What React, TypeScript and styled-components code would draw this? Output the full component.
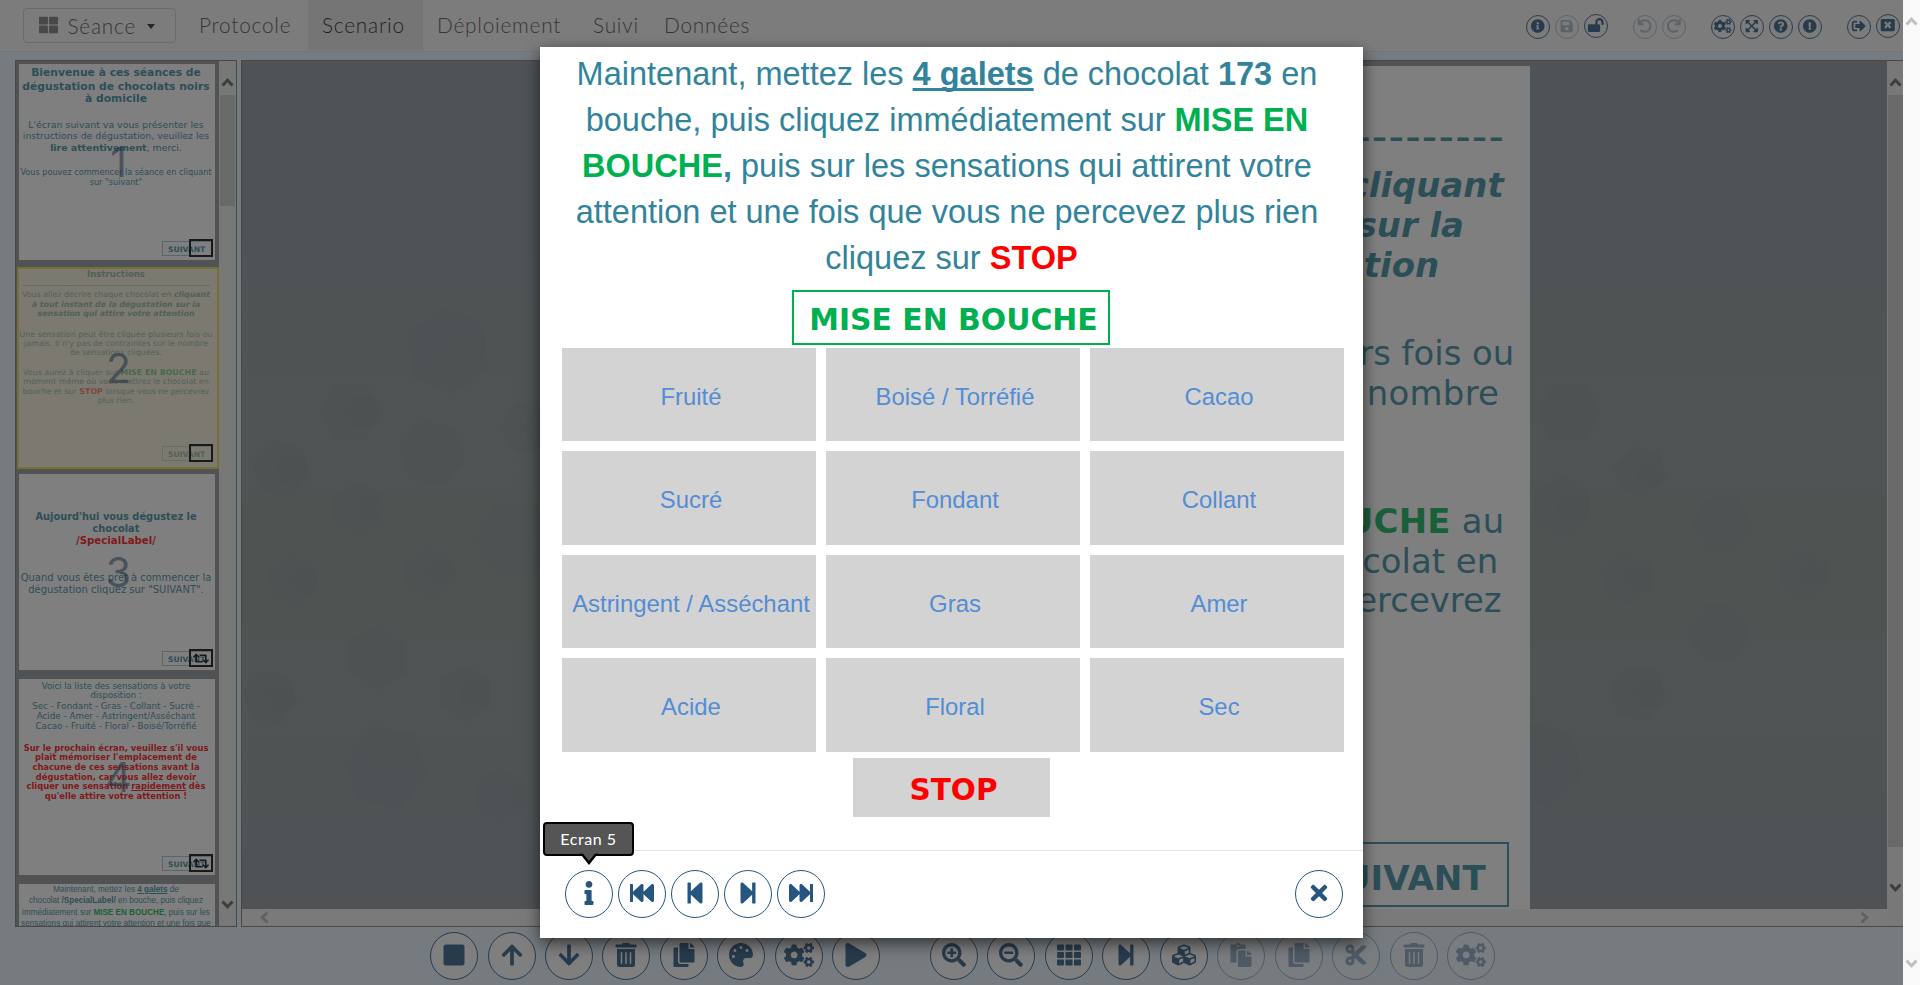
import React from 'react';
import styled, { createGlobalStyle, css } from 'styled-components';
import type { IconType } from 'react-icons';
import {
  FaThLarge, FaInfoCircle, FaSave, FaLockOpen, FaUndo, FaRedo, FaCogs, FaExpandArrowsAlt,
  FaQuestionCircle, FaExclamationCircle, FaSignOutAlt, FaWindowClose, FaStop, FaArrowUp,
  FaArrowDown, FaTrashAlt, FaCopy, FaPalette, FaPlay, FaSearchPlus, FaSearchMinus, FaTh,
  FaStepForward, FaStepBackward, FaFastBackward, FaFastForward, FaCubes, FaPaste, FaCut,
  FaInfo, FaTimes, FaRetweet,
} from 'react-icons/fa';

const TEAL = '#31849b';
const GREEN = '#00b050';
const NAVY = '#26567f';
const GOTHIC = "'Century Gothic', Lato, sans-serif";
const VERDANA = "'DejaVu Sans', sans-serif";
const ARIAL = "'Liberation Sans', sans-serif";

const GlobalStyle = createGlobalStyle`
  html, body { margin: 0; overflow: hidden; }
  *, *::before, *::after { box-sizing: border-box; }
  button { padding: 0; font: inherit; }
`;

const Screen = styled.div`
  position: relative;
  display: flex;
  width: 1920px;
  height: 985px;
  overflow: hidden;
`;

const Page = styled.div`
  display: flex;
  flex-direction: column;
  width: 1903px;
  height: 985px;
  background: #e5f4fe;
`;

const WindowScroll = styled.div`
  display: flex;
  flex-direction: column;
  align-items: center;
  justify-content: space-between;
  width: 17px;
  padding: 17px 0;
  background: #f9f9f9;
  color: #c0c0c0;
`;

/* ---------- navigation bar ---------- */

const NavBar = styled.nav`
  display: flex;
  height: 52px;
  flex: none;
  padding-left: 23px;
  background: #f7f7f7;
  border-bottom: 1px solid #e4e4e4;
  font-family: ${GOTHIC};
  font-size: 20.8px;
  font-weight: 300;
  letter-spacing: 0.78px;
  color: #4a4a4a;
`;

const SessionSelect = styled.div`
  display: flex;
  align-items: center;
  width: 153px;
  height: 35px;
  margin-top: 8px;
  padding-left: 15px;
  border: 1px solid #ccc;
  border-radius: 4px;
  > svg { width: 19px; height: 20px; margin-right: 9.5px; margin-top: -2px; color: #777; }
`;

const Caret = styled.span`
  margin: 2px 0 0 11px;
  border: 4.5px solid transparent;
  border-top: 5px solid #222;
  border-bottom: 0;
`;

const NavLink = styled.a<{ $active?: boolean; $width: number }>`
  width: ${p => p.$width}px;
  height: 50px;
  line-height: 49px;
  padding-left: 14px;
  ${p => p.$active && css`background: #e5e5e5; color: #111;`}
`;

const NavLinks = styled.div`
  display: flex;
  margin-left: 9px;
`;

const NavTools = styled.div`
  display: flex;
  margin-left: auto;
  padding: 15px 3px 0 0;
  gap: 5px;
`;

const ToolGroup = styled.div`
  display: flex;
  gap: 5px;
  margin-left: 20px;
`;

const RoundButton = styled.button<{ $size: number; $icon: number; $faded?: boolean; $lift?: boolean }>`
  display: flex;
  flex: none;
  align-items: center;
  justify-content: center;
  width: ${p => p.$size}px;
  height: ${p => p.$size}px;
  border: 1px solid ${NAVY};
  border-radius: 50%;
  background: #fff;
  color: ${NAVY};
  opacity: ${p => (p.$faded ? 0.5 : 1)};
  ${p => p.$lift && css`margin-top: -1px;`}
  > svg {
    flex: none;
    width: ${p => p.$icon * 1.25}px;
    height: ${p => p.$icon}px;
    margin-top: -2px;
  }
`;

const NavRound = styled(RoundButton)`
  background: transparent;
  opacity: ${p => (p.$faded ? 0.38 : 1)};
`;

/* ---------- work area ---------- */

const WorkArea = styled.main`
  display: flex;
  gap: 4px;
  height: 867px;
  flex: none;
  margin-top: 8px;
  padding-left: 15px;
`;

const Sidebar = styled.aside`
  display: flex;
  width: 222px;
  border: 1px solid #777;
  background: #889297;
`;

const CardList = styled.div`
  flex: 1;
  padding: 1px 0 0 1px;
  overflow: hidden;
`;

const ScrollTrack = styled.div<{ $w: number }>`
  display: flex;
  flex-direction: column;
  align-items: center;
  width: ${p => p.$w}px;
  padding-top: 17px;
  background: #eee;
  color: #5a5a5a;
`;

const ScrollThumb = styled.div<{ $h: number }>`
  width: 15px;
  height: ${p => p.$h}px;
  margin-top: 8px;
  background: #c9c9c9;
`;

const ArrowSpacer = styled.div<{ $h: number }>`
  height: ${p => p.$h}px;
`;

const Card = styled.section<{ $selected?: boolean }>`
  --edge: 0px;
  position: relative;
  width: 200px;
  height: 200px;
  margin-bottom: 5px;
  padding-right: 2px;
  border: 2px solid #8e8e8e;
  background: #fff;
  text-align: center;
  font-family: ${VERDANA};
  color: ${TEAL};
  overflow: hidden;
  ${p => p.$selected && css`
    --edge: 2px;
    width: 202px;
    height: 202px;
    margin-bottom: 3px;
    padding-right: 4px;
    border-color: #e9dc40;
    &::after {
      content: '';
      position: absolute;
      inset: 0;
      background: rgba(238, 228, 175, 0.47);
    }
  `}
`;

const CardLine = styled.div<{ $size: number; $gap?: number; $bold?: boolean }>`
  height: 10px;
  margin: ${p => p.$gap ?? 0}px -20px 0;
  line-height: 10px;
  font-size: ${p => p.$size}px;
  font-weight: ${p => (p.$bold ? 700 : 400)};
  white-space: nowrap;
`;

const Red = styled.b`color: #f00;`;
const Green = styled.b`color: ${GREEN};`;

const CardNumber = styled.span`
  position: absolute;
  z-index: 2;
  inset: 0 var(--edge) 0 3px;
  display: flex;
  align-items: center;
  justify-content: center;
  font-family: 'Century Gothic', Inter, sans-serif;
  font-size: 41px;
  color: #24486c;
  opacity: 0.6;
`;

const CardNext = styled.span`
  position: absolute;
  right: calc(3px + var(--edge));
  bottom: calc(4px + var(--edge));
  width: 50px;
  height: 15px;
  padding-left: 5px;
  border: 1px solid #9cc4cf;
  text-align: left;
  font-size: 7.6px;
  line-height: 15px;
  font-weight: 700;
`;

const CardFlag = styled.span`
  position: absolute;
  z-index: 2;
  right: calc(2px + var(--edge));
  bottom: calc(3px + var(--edge));
  display: flex;
  align-items: center;
  justify-content: center;
  width: 24px;
  height: 18px;
  border: 2px solid #000;
  color: #000;
  > svg { width: 16px; height: 13px; flex: none; }
`;

const Stage = styled.section`
  display: flex;
  flex: 1;
  border: 1px solid #777;
  border-right: 0;
  background: #889297;
`;

const StageColumn = styled.div`
  flex: 1;
  display: flex;
  flex-direction: column;
`;

const StageView = styled.div`
  position: relative;
  flex: 1;
  display: flex;
  justify-content: flex-end;
  padding: 5px 357px 0 0;
`;

const Pattern = styled.svg`
  position: absolute;
  inset: 0;
`;

const StageScroll = styled.div`
  display: flex;
  align-items: center;
  justify-content: space-between;
  height: 17px;
  padding: 0 17px;
  background: #f2f2f2;
  color: #b4b4b4;
`;

const Sheet = styled.article`
  position: relative;
  display: flex;
  flex-direction: column;
  align-items: center;
  width: 860px;
  height: 843px;
  padding-top: 12px;
  background: #fff;
  color: ${TEAL};
  font-family: ${VERDANA};
  font-size: 33.9px;
  white-space: nowrap;
`;

const SheetLine = styled.div<{ $gap?: number; $track?: number; $dashes?: boolean }>`
  height: 40px;
  line-height: 40px;
  margin-top: ${p => p.$gap ?? 0}px;
  letter-spacing: ${p => p.$track ?? 0}px;
  ${p => p.$dashes && css`
    font-size: 43px;
    line-height: 36px;
    letter-spacing: 1.16px;
    padding-left: 10px;
  `}
`;

const SheetNext = styled.div`
  width: 214px;
  height: 65px;
  margin: auto 21px 2px auto;
  padding-top: 3px;
  border: 2px solid ${TEAL};
  text-align: center;
  font-size: 34.2px;
  font-weight: 700;
  line-height: 62px;
`;

const Toolbar = styled.div`
  display: flex;
  justify-content: center;
  gap: 9.45px;
  padding: 5px 0 0 22px;
`;

const ToolbarGap = styled.span`width: 31px;`;

/* ---------- preview dialog ---------- */

const Overlay = styled.div`
  position: absolute;
  z-index: 10;
  inset: 0 17px 0 0;
  background: rgba(42, 42, 42, 0.6);
`;

const Dialog = styled.div`
  position: absolute;
  z-index: 11;
  top: 47px;
  left: 540px;
  display: flex;
  flex-direction: column;
  align-items: center;
  width: 823px;
  height: 891px;
  padding-top: 3.6px;
  background: #fff;
  box-shadow: 0 5px 15px rgba(0, 0, 0, 0.6);
`;

const Prompt = styled.p`
  margin: 0;
  height: 239.4px;
  font: 32.5px/46.2px ${ARIAL};
  color: ${TEAL};
  text-align: center;
  white-space: pre;
  u { text-decoration-thickness: 3px; text-underline-offset: 3px; text-decoration-skip-ink: none; }
`;

const StartButton = styled.button`
  width: 318px;
  height: 55px;
  margin-right: 2px;
  padding: 5px 0 0 6px;
  border: 2px solid ${GREEN};
  background: #fff;
  color: ${GREEN};
  font: 700 29.85px ${VERDANA};
`;

const Descriptors = styled.div`
  display: grid;
  grid-template-columns: repeat(3, 254px);
  grid-template-rows: repeat(4, 1fr);
  gap: 10px;
  height: 404px;
  margin: 3px 0 6px 3px;
`;

const Descriptor = styled.button`
  padding: 4px 0 0 4px;
  border: 0;
  background: #d3d3d3;
  color: #548dd4;
  font: 23.9px ${ARIAL};
  white-space: nowrap;
`;

const StopButton = styled.button`
  width: 197px;
  height: 59px;
  padding: 5px 0 0 4px;
  border: 0;
  background: #d3d3d3;
  color: #f00;
  font: 700 29.5px ${VERDANA};
`;

const DialogFooter = styled.footer`
  position: relative;
  display: flex;
  align-self: stretch;
  gap: 5px;
  margin-top: auto;
  height: 88px;
  padding: 19px 20px 0 25px;
  border-top: 1px solid #e5e5e5;
  > :last-child { margin-left: auto; }
`;

const Tip = styled.div`
  position: absolute;
  left: 3px;
  top: -29px;
  width: 91px;
  height: 34px;
  border: 2px solid #000;
  border-radius: 4px;
  background: #555;
  color: #fff;
  font: 400 16px/29px ${GOTHIC};
  letter-spacing: 0.55px;
  text-align: center;
  > svg { position: absolute; left: 35px; top: 28px; }
`;

const turns = { up: 0, right: 90, down: 180, left: 270 };

const Chevron = ({ dir }: { dir: keyof typeof turns }) => (
  <svg width="11" height="9" viewBox="0 0 11 9" style={{ overflow: 'visible', flex: 'none' }}>
    <path d="M0.5 7.5 L5.5 2.2 L10.5 7.5" fill="none" stroke="currentColor" strokeWidth="3"
      transform={`rotate(${turns[dir]} 5.5 4.5)`} />
  </svg>
);

const hexagons: [number, number, number, number][] = [
  [351, 412, 31, 0], [448, 350, 44, 25], [432, 453, 34, 10], [282, 470, 30, 15], [358, 510, 29, 30],
  [515, 540, 42, 0], [293, 580, 28, 20], [430, 573, 29, 25], [378, 657, 33, 30], [465, 693, 28, 30],
  [386, 767, 44, 10], [500, 795, 28, 30], [270, 697, 28, 10], [530, 428, 30, 0],
  [1569, 413, 32, 0], [1640, 472, 27, 15], [1562, 508, 32, 30], [1722, 525, 32, 0], [1628, 578, 28, 20],
  [1805, 575, 28, 25], [1719, 632, 32, 0], [1638, 693, 29, 10], [1541, 765, 44, 15],
];

const hexPoints = (cx: number, cy: number, r: number, turn: number) =>
  [0, 60, 120, 180, 240, 300]
    .map(a => ((a + turn) * Math.PI) / 180)
    .map(a => `${(cx + r * Math.cos(a)).toFixed(1)},${(cy + r * Math.sin(a)).toFixed(1)}`)
    .join(' ');

const Backdrop = () => (
  <Pattern width="1645" height="848" viewBox="242 61 1645 848">
    <defs>
      <linearGradient id="haze" x1="0" y1="0" x2="0" y2="1">
        <stop offset="0.2" stopColor="#889391" stopOpacity="0" />
        <stop offset="0.6" stopColor="#889391" stopOpacity="1" />
        <stop offset="0.95" stopColor="#889391" stopOpacity="0" />
      </linearGradient>
    </defs>
    <rect x="242" y="61" width="1645" height="848" fill="url(#haze)" />
    {hexagons.map(([x, y, r, t], i) => (
      <g key={i} fill="#7c888d">
        <polygon points={hexPoints(x, y, r, t)} opacity={r > 40 || i % 3 === 2 ? 0.2 : 0.38} />
        <polygon points={hexPoints(x + r * 0.35, y, r * 0.6, t)} opacity="0.14" />
      </g>
    ))}
  </Pattern>
);

type Tool = [IconType, boolean?, boolean?];

const navGroups: Tool[][] = [
  [[FaInfoCircle], [FaSave, true], [FaLockOpen, false, true]],
  [[FaUndo, true], [FaRedo, true]],
  [[FaCogs], [FaExpandArrowsAlt], [FaQuestionCircle], [FaExclamationCircle]],
  [[FaSignOutAlt], [FaWindowClose, false, true]],
];

const editTools: Tool[] = [[FaStop], [FaArrowUp], [FaArrowDown], [FaTrashAlt], [FaCopy], [FaPalette], [FaCogs], [FaPlay]];
const viewTools: Tool[] = [
  [FaSearchPlus], [FaSearchMinus], [FaTh], [FaStepForward], [FaCubes],
  [FaPaste, true], [FaCopy, true], [FaCut, true], [FaTrashAlt, true], [FaCogs, true],
];

const descriptors = [
  'Fruité', 'Boisé / Torréfié', 'Cacao', 'Sucré', 'Fondant', 'Collant',
  'Astringent / Asséchant', 'Gras', 'Amer', 'Acide', 'Floral', 'Sec',
];

const renderTools = (tools: Tool[]) =>
  tools.map(([Icon, faded], i) => (
    <RoundButton key={i} $size={48} $icon={24} $faded={faded}><Icon /></RoundButton>
  ));

const Thumbnails = () => (
  <CardList>
    <Card>
      <CardLine $size={10.75} $bold $gap={3.5}>Bienvenue à ces séances de</CardLine>
      <CardLine $size={10.75} $bold $gap={4}>dégustation de chocolats noirs</CardLine>
      <CardLine $size={10.75} $bold $gap={2}>à domicile</CardLine>
      <CardLine $size={9.4} $gap={16}>L'écran suivant va vous présenter les</CardLine>
      <CardLine $size={9.4} $gap={1}>instructions de dégustation, veuillez les</CardLine>
      <CardLine $size={9.4} $gap={2}><b>lire attentivement</b>, merci.</CardLine>
      <CardLine $size={8.15} $gap={14.5}>Vous pouvez commencer la séance en cliquant</CardLine>
      <CardLine $size={8.15}>sur "suivant"</CardLine>
      <CardNumber>1</CardNumber>
      <CardNext>SUIVANT</CardNext>
      <CardFlag />
    </Card>
    <Card $selected>
      <CardLine $size={8.55} $bold>Instructions</CardLine>
      <CardLine $size={8.1} $gap={1}>{'-'.repeat(64)}</CardLine>
      <CardLine $size={7.9}>Vous allez décrire chaque chocolat en <b><i>cliquant</i></b></CardLine>
      <CardLine $size={7.85} $bold><i>à tout instant de la dégustation sur la</i></CardLine>
      <CardLine $size={7.85} $bold $gap={-1}><i>sensation qui attire votre attention</i></CardLine>
      <CardLine $size={7.9} $gap={10.5}>Une sensation peut être cliquée plusieurs fois ou</CardLine>
      <CardLine $size={7.95} $gap={-1}>jamais. Il n'y pas de contraintes sur le nombre</CardLine>
      <CardLine $size={7.9} $gap={-1}>de sensations cliquées.</CardLine>
      <CardLine $size={7.9} $gap={10}>Vous aurez à cliquer sur <Green>MISE EN BOUCHE</Green> au</CardLine>
      <CardLine $size={7.9} $gap={-1}>moment même où vous mettrez le chocolat en</CardLine>
      <CardLine $size={7.9}>bouche et sur <Red>STOP</Red> lorsque vous ne percevrez</CardLine>
      <CardLine $size={7.9} $gap={-1}>plus rien.</CardLine>
      <CardNumber>2</CardNumber>
      <CardNext>SUIVANT</CardNext>
      <CardFlag />
    </Card>
    <Card>
      <CardLine $size={9.85} $bold $gap={38}>Aujourd'hui vous dégustez le</CardLine>
      <CardLine $size={9.85} $bold $gap={2}>chocolat</CardLine>
      <CardLine $size={10.2} $gap={2}><Red>/SpecialLabel/</Red></CardLine>
      <CardLine $size={9.95} $gap={27}>Quand vous êtes prêt à commencer la</CardLine>
      <CardLine $size={10} $gap={2}>dégustation cliquez sur "SUIVANT".</CardLine>
      <CardNumber>3</CardNumber>
      <CardNext>SUIVANT</CardNext>
      <CardFlag><FaRetweet /></CardFlag>
    </Card>
    <Card>
      <CardLine $size={8.47} $gap={2}>Voici la liste des sensations à votre</CardLine>
      <CardLine $size={8.47} $gap={-1}>disposition :</CardLine>
      <CardLine $size={8.76} $gap={1}>Sec - Fondant - Gras - Collant - Sucré -</CardLine>
      <CardLine $size={8.76}>Acide - Amer - Astringent/Asséchant</CardLine>
      <CardLine $size={8.76}>Cacao - Fruité - Floral - Boisé/Torréfié</CardLine>
      <Red>
        <CardLine $size={8.38} $bold $gap={11.7}>Sur le prochain écran, veuillez s'il vous</CardLine>
        <CardLine $size={8.38} $bold $gap={-1}>plaît mémoriser l'emplacement de</CardLine>
        <CardLine $size={8.38} $bold>chacune de ces sensations avant la</CardLine>
        <CardLine $size={8.38} $bold>dégustation, car vous allez devoir</CardLine>
        <CardLine $size={8.38} $bold $gap={-1}>cliquer une sensation <u>rapidement</u> dès</CardLine>
        <CardLine $size={8.38} $bold>qu'elle attire votre attention !</CardLine>
      </Red>
      <CardNumber>4</CardNumber>
      <CardNext>SUIVANT</CardNext>
      <CardFlag><FaRetweet /></CardFlag>
    </Card>
    <Card style={{ fontFamily: ARIAL }}>
      <CardLine $size={8.15} $gap={1}>Maintenant, mettez les <b><u>4 galets</u></b> de</CardLine>
      <CardLine $size={8.15} $gap={1}>chocolat <b>/SpecialLabel/</b> en bouche, puis cliquez</CardLine>
      <CardLine $size={8.15} $gap={2}>immédiatement sur <Green>MISE EN BOUCHE</Green>, puis sur les</CardLine>
      <CardLine $size={8.2} $gap={1}>sensations qui attirent votre attention et une fois que</CardLine>
    </Card>
  </CardList>
);

export default function App() {
  return (
    <Screen>
      <GlobalStyle />
      <Page>
        <NavBar>
          <SessionSelect><FaThLarge />Séance<Caret /></SessionSelect>
          <NavLinks>
            <NavLink $width={123}>Protocole</NavLink>
            <NavLink $width={115} $active>Scenario</NavLink>
            <NavLink $width={156}>Déploiement</NavLink>
            <NavLink $width={71}>Suivi</NavLink>
            <NavLink $width={116}>Données</NavLink>
          </NavLinks>
          <NavTools>
            {navGroups.map((group, g) => (
              <ToolGroup key={g}>
                {group.map(([Icon, faded, lift], i) => (
                  <NavRound key={i} $size={24} $icon={14} $faded={faded} $lift={lift}><Icon /></NavRound>
                ))}
              </ToolGroup>
            ))}
          </NavTools>
        </NavBar>

        <WorkArea>
          <Sidebar>
            <Thumbnails />
            <ScrollTrack $w={17}>
              <Chevron dir="up" />
              <ScrollThumb $h={111} />
              <ArrowSpacer $h={694} />
              <Chevron dir="down" />
            </ScrollTrack>
          </Sidebar>
          <Stage>
            <StageColumn>
              <StageView>
                <Backdrop />
                <Sheet>
                  <SheetLine><b>Instructions</b></SheetLine>
                  <SheetLine $dashes>{'-'.repeat(48)}</SheetLine>
                  <SheetLine $gap={8}>Vous allez décrire chaque chocolat en <b><i>cliquant</i></b></SheetLine>
                  <SheetLine><b><i>à tout instant de la dégustation sur la</i></b></SheetLine>
                  <SheetLine><b><i>sensation qui attire votre attention</i></b></SheetLine>
                  <SheetLine $gap={48}>Une sensation peut être cliquée plusieurs fois ou</SheetLine>
                  <SheetLine $track={0.26}>jamais. Il n'y pas de contraintes sur le nombre</SheetLine>
                  <SheetLine>de sensations cliquées.</SheetLine>
                  <SheetLine $gap={48} $track={0.26}>Vous aurez à cliquer sur <Green>MISE EN BOUCHE</Green> au</SheetLine>
                  <SheetLine>moment même où vous mettrez le chocolat en</SheetLine>
                  <SheetLine $gap={-1}>bouche et sur <Red>STOP</Red> lorsque vous ne percevrez</SheetLine>
                  <SheetLine>plus rien.</SheetLine>
                  <SheetNext>SUIVANT</SheetNext>
                </Sheet>
              </StageView>
              <StageScroll><Chevron dir="left" /><Chevron dir="right" /></StageScroll>
            </StageColumn>
            <ScrollTrack $w={16}>
              <Chevron dir="up" />
              <ScrollThumb $h={752} />
              <ArrowSpacer $h={36} />
              <Chevron dir="down" />
            </ScrollTrack>
          </Stage>
        </WorkArea>

        <Toolbar>
          {renderTools(editTools)}
          <ToolbarGap />
          {renderTools(viewTools)}
        </Toolbar>
      </Page>
      <WindowScroll><Chevron dir="up" /><Chevron dir="down" /></WindowScroll>

      <Overlay />
      <Dialog>
        <Prompt>
          {'Maintenant, mettez les '}<b><u>4 galets</u></b>{' de chocolat '}<b>173</b>{' en \n'}
          {'bouche, puis cliquez immédiatement sur '}<Green>MISE EN </Green>{'\n'}
          <Green>BOUCHE</Green><b>,</b>{' puis sur les sensations qui attirent votre \n'}
          {'attention et une fois que vous ne percevez plus rien \n'}
          {'cliquez sur '}<Red>STOP</Red>
        </Prompt>
        <StartButton>MISE EN BOUCHE</StartButton>
        <Descriptors>
          {descriptors.map(name => <Descriptor key={name}>{name}</Descriptor>)}
        </Descriptors>
        <StopButton>STOP</StopButton>
        <DialogFooter>
          <Tip>
            Ecran 5
            <svg width="18" height="14" viewBox="0 0 18 14">
              <path d="M1 1 L9 11 L17 1" fill="#555" stroke="#000" strokeWidth="2.4" />
              <path d="M1 0 H17 V1.6 H1 Z" fill="#555" />
            </svg>
          </Tip>
          {[FaInfo, FaFastBackward, FaStepBackward, FaStepForward, FaFastForward, FaTimes].map((Icon, i) => (
            <RoundButton key={i} $size={48} $icon={24}><Icon /></RoundButton>
          ))}
        </DialogFooter>
      </Dialog>
    </Screen>
  );
}
